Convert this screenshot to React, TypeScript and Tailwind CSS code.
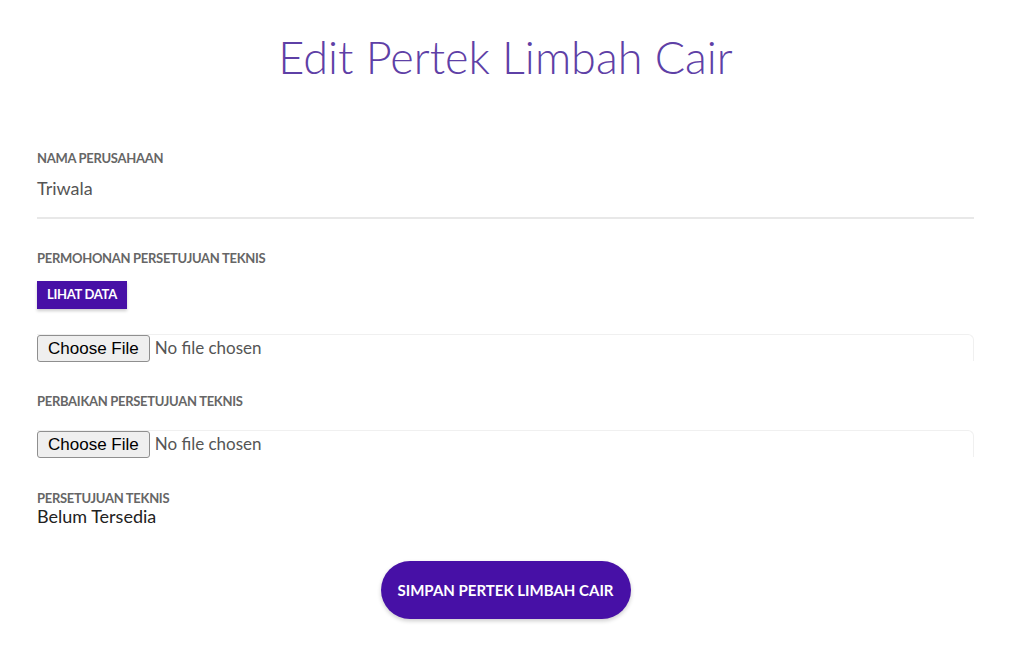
const FileField = ({ className }: { className: string }) => (
  <div className={`flex h-[27px] items-center rounded-tr-md border-t border-r border-[#f0f0f0] ${className}`}>
    <span className="flex h-[27px] items-center rounded-[3px] border border-[#8f8f8f] bg-[#efefef] px-[10px] text-[17px] leading-none text-black font-['Liberation_Sans',sans-serif]">
      Choose File
    </span>
    <span className="ml-[5px] text-[17px] text-[#555]">No file chosen</span>
  </div>
)

const Label = ({ children }: { children: React.ReactNode }) => (
  <div className="text-[13px] font-bold uppercase leading-[18px] tracking-[-0.3px] text-[#666]">{children}</div>
)

const App = () => {
  return (
    <div className="min-h-screen bg-white font-['Lato',sans-serif]">
      <div className="ml-[37px] w-[937px]">
        <h1 className="pt-[24px] text-center text-[45px] font-light leading-[66px] text-[#5e40a6]">
          Edit Pertek Limbah Cair
        </h1>

        <form className="mt-[59px]">
          <Label>Nama Perusahaan</Label>
          <div className="mt-[8px] border-b-2 border-[#e8e8e8] pb-[15px] text-[18px] text-[#555]">
            Triwala
          </div>

          <div className="mt-[30px]">
            <Label>Permohonan Persetujuan Teknis</Label>
            <button
              type="button"
              className="mt-[14px] h-[28px] bg-[#4710a6] px-[10px] text-[13px] font-bold uppercase tracking-[-0.3px] text-white shadow-[0_2px_3px_rgba(0,0,0,0.2)]"
            >
              Lihat Data
            </button>
            <FileField className="mt-[25px]" />
          </div>

          <div className="mt-[31px]">
            <Label>Perbaikan Persetujuan Teknis</Label>
            <FileField className="mt-[20px]" />
          </div>

          <div className="mt-[33px]">
            <div className="text-[13px] font-bold uppercase leading-[16px] tracking-[-0.3px] text-[#666]">
              Persetujuan Teknis
            </div>
            <div className="text-[18px] leading-[20px] text-[#222]">Belum Tersedia</div>
          </div>

          <div className="mt-[35px] flex justify-center">
            <button
              type="submit"
              className="h-[58px] w-[250px] rounded-full bg-[#4710a6] text-[15px] font-bold uppercase text-white shadow-[0_2px_4px_rgba(0,0,0,0.2)]"
            >
              Simpan Pertek Limbah Cair
            </button>
          </div>
        </form>
      </div>
    </div>
  )
}

export default App
